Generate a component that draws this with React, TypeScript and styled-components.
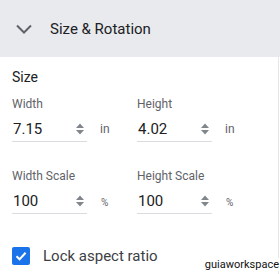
import React, { FC } from 'react';
import styled, { createGlobalStyle } from 'styled-components';

// Styles
const GlobalStyle = createGlobalStyle`
  body {
    margin: 0;
    font-family: Roboto, "Liberation Sans", Arial, sans-serif;
    background: #fff;
  }
`;

const Panel = styled.div`
  position: relative;
  width: 280px;
  height: 274px;
  overflow: hidden;
  background: #fff;
`;

const Header = styled.div`
  display: flex;
  align-items: center;
  height: 57px;
  padding-left: 16px;
  background: #e8eaed;
  box-sizing: border-box;
`;

const HeaderTitle = styled.span`
  margin-left: 18px;
  font-size: 15px;
  font-weight: 400;
  color: #202124;
`;

const Body = styled.div`
  width: 279px;
  height: 217px;
  border-right: 1px solid #e6e6e6;
  padding: 11px 0 0 12px;
  box-sizing: border-box;
`;

const SectionTitle = styled.div`
  font-size: 14px;
  font-weight: 400;
  color: #202124;
  line-height: 18px;
`;

const Grid = styled.div`
  display: grid;
  grid-template-columns: 125px 120px;
  row-gap: 26px;
  margin-top: 10px;
`;

const Field = styled.div`
  display: flex;
  flex-direction: column;
`;

const Label = styled.label`
  font-size: 12px;
  color: #5f6368;
  line-height: 16px;
`;

const InputRow = styled.div`
  display: flex;
  align-items: center;
  margin-top: 4px;
`;

const InputBox = styled.div`
  display: flex;
  align-items: center;
  width: 75px;
  height: 26px;
  border-bottom: 1px solid #dadce0;
  box-sizing: border-box;
  padding-left: 1px;
`;

const Value = styled.span`
  flex: 1;
  font-size: 15px;
  color: #202124;
`;

const Spinner = styled.svg`
  margin-right: 2px;
`;

const Unit = styled.span<{ $small?: boolean }>`
  margin-left: ${(p) => (p.$small ? 14 : 13)}px;
  margin-top: ${(p) => (p.$small ? 3 : 0)}px;
  font-size: ${(p) => (p.$small ? 10 : 12)}px;
  color: #5f6368;
`;

const CheckRow = styled.div`
  display: flex;
  align-items: center;
  margin-top: 33px;
`;

const Box = styled.span`
  display: flex;
  align-items: center;
  justify-content: center;
  width: 18px;
  height: 18px;
  border-radius: 2px;
  background: #1a73e8;
`;

const CheckLabel = styled.span`
  margin-left: 13px;
  font-size: 15px;
  color: #3c4043;
`;

const Watermark = styled.span`
  position: absolute;
  right: 1px;
  bottom: 3px;
  font-size: 11px;
  color: #111;
  background: #fff;
`;

// Types
type FieldProps = { label: string; value: string; unit: string };

// Components
const Chevron: FC = () => (
  <svg width="16" height="10" viewBox="0 0 16 10">
    <path d="M1 1.5 L8 8.5 L15 1.5" fill="none" stroke="#5f6368" strokeWidth="2" />
  </svg>
);

const NumberField: FC<FieldProps> = ({ label, value, unit }) => (
  <Field>
    <Label>{label}</Label>
    <InputRow>
      <InputBox>
        <Value>{value}</Value>
        <Spinner width="10" height="14" viewBox="0 0 10 14">
          <path d="M5 1.5 L9 6 L1 6 Z" fill="#80868b" />
          <path d="M5 12.5 L9 8 L1 8 Z" fill="#80868b" />
        </Spinner>
      </InputBox>
      <Unit $small={unit === '%'}>{unit}</Unit>
    </InputRow>
  </Field>
);

const App: FC = () => (
  <Panel>
    <GlobalStyle />
    <Header>
      <Chevron />
      <HeaderTitle>Size &amp; Rotation</HeaderTitle>
    </Header>
    <Body>
      <SectionTitle>Size</SectionTitle>
      <Grid>
        <NumberField label="Width" value="7.15" unit="in" />
        <NumberField label="Height" value="4.02" unit="in" />
        <NumberField label="Width Scale" value="100" unit="%" />
        <NumberField label="Height Scale" value="100" unit="%" />
      </Grid>
      <CheckRow>
        <Box>
          <svg width="14" height="14" viewBox="0 0 14 14">
            <path d="M2.5 7.2 L5.6 10.2 L11.6 3.8" fill="none" stroke="#fff" strokeWidth="2" />
          </svg>
        </Box>
        <CheckLabel>Lock aspect ratio</CheckLabel>
      </CheckRow>
    </Body>
    <Watermark>guiaworkspace</Watermark>
  </Panel>
);

export default App;
